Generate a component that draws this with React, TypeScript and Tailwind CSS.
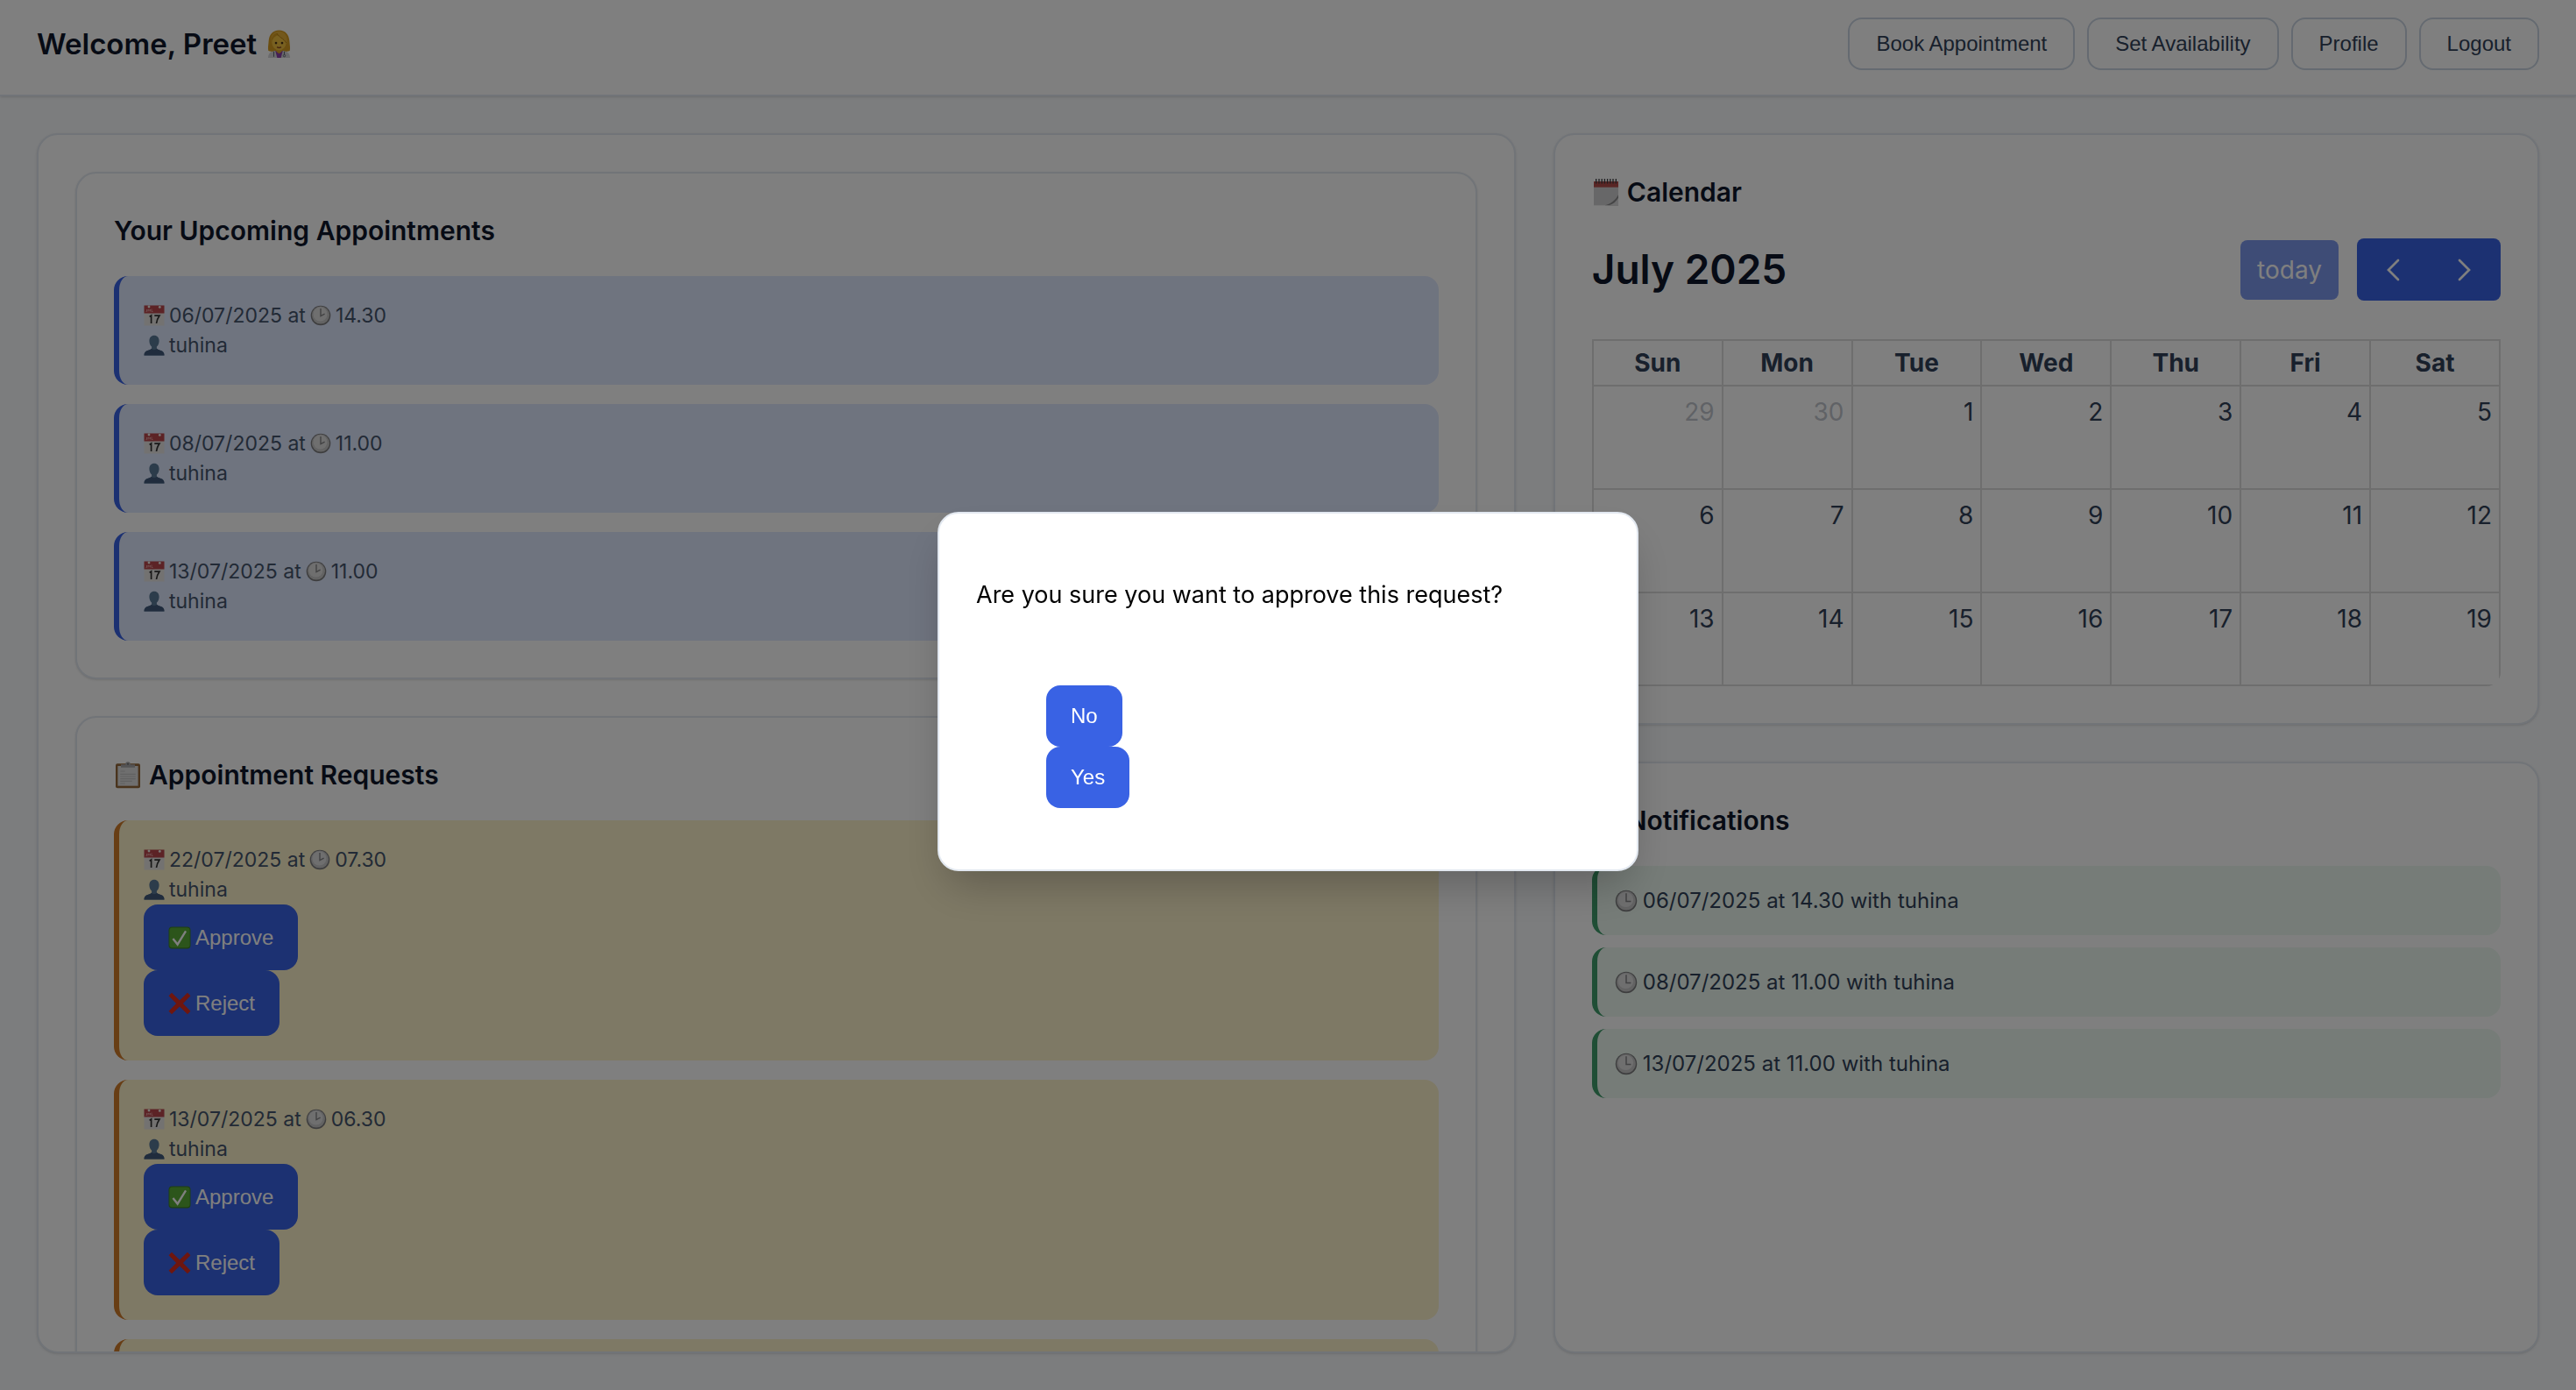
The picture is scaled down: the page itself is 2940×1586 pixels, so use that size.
import type { ReactNode } from 'react';
import clsx from 'clsx';

type Visit = { date: string; time: string; name: string };

const upcoming: Visit[] = [
  { date: '06/07/2025', time: '14.30', name: 'tuhina' },
  { date: '08/07/2025', time: '11.00', name: 'tuhina' },
  { date: '13/07/2025', time: '11.00', name: 'tuhina' },
];

const requests: Visit[] = [
  { date: '22/07/2025', time: '07.30', name: 'tuhina' },
  { date: '13/07/2025', time: '06.30', name: 'tuhina' },
];

const weekdays = ['Sun', 'Mon', 'Tue', 'Wed', 'Thu', 'Fri', 'Sat'];
const weeks = [
  [29, 30, 1, 2, 3, 4, 5],
  [6, 7, 8, 9, 10, 11, 12],
  [13, 14, 15, 16, 17, 18, 19],
];

function Emoji({
  className,
  viewBox = '0 0 24 24',
  children,
}: {
  className: string;
  viewBox?: string;
  children: ReactNode;
}) {
  return (
    <svg viewBox={viewBox} aria-hidden="true" className={clsx('shrink-0', className)}>
      {children}
    </svg>
  );
}

function CalendarEmoji() {
  return (
    <Emoji className="size-6">
      <rect x="0.5" y="1" width="23" height="22.5" fill="#e6e4e2" />
      <rect x="0.5" y="0.5" width="23" height="9" fill="#b8474d" />
      <path d="M2.5 7.5h1V5M5 7.5V5l1.2 1.4L7.4 5v2.5M9 4.5v3h1.5" stroke="#e9a9aa" strokeWidth="0.8" fill="none" />
      <circle cx="6" cy="2" r="1.4" fill="#f2efe9" />
      <circle cx="18.3" cy="2.4" r="1.4" fill="#f2efe9" />
      <path d="M6.6 13.4l2-1.4v9M12.3 12.2h5.6c-1.8 2.6-3 5-3.4 8.8" stroke="#333" strokeWidth="1.7" fill="none" />
    </Emoji>
  );
}

function ClockEmoji({ className = 'size-6', hour = 'two' }: { className?: string; hour?: 'two' | 'three' }) {
  return (
    <Emoji className={className}>
      <circle cx="12" cy="12" r="11.3" fill="#7c7c7e" />
      <circle cx="12" cy="11.6" r="10" fill="#c6c6c7" />
      <circle cx="11.5" cy="10.5" r="8" fill="#dededf" />
      <path
        d={hour === 'two' ? 'M12 4v8.5l4.6-2.4' : 'M12 4v8.5h5'}
        stroke="#858587"
        strokeWidth="1.4"
        fill="none"
      />
    </Emoji>
  );
}

function PersonEmoji() {
  return (
    <Emoji className="size-6">
      <path
        d="M12 .8c3.400 0 5.600 2.500 5.600 6.200 0 3-1.300 5.300-2.700 6.500v1.900c.5 1.200 2.300 1.800 4.700 2.700 2.600.9 3.900 2.600 3.900 5.400H.5c0-2.800 1.300-4.500 3.900-5.400 2.400-.9 4.200-1.500 4.700-2.700v-1.900C7.700 12.300 6.400 10 6.400 7c0-3.700 2.200-6.200 5.600-6.200z"
        fill="#587896"
      />
      <path
        d="M.5 23.500c0-2.800 1.300-4.500 3.900-5.400 2-.7 3.700-1.300 4.400-2.100 1.900 1.500 4.500 1.500 6.400 0 .7.800 2.400 1.400 4.400 2.100 2.600.9 3.900 2.600 3.900 5.400z"
        fill="#40597a"
      />
    </Emoji>
  );
}

function ClipboardEmoji() {
  return (
    <Emoji className="size-8">
      <rect x="1.5" y="2.5" width="21" height="21" rx="1.5" fill="#94693b" />
      <rect x="3.3" y="4.5" width="17.4" height="17" fill="#dedede" />
      <path
        d="M5.500 9h4M5.500 11.500h13M5.500 13.500h13M5.500 15.500h13M5.500 17.500h10M5.500 19.500h4"
        stroke="#c2c2c2"
        strokeWidth="0.9"
      />
      <path d="M6 3.200h3.800a2.200 2.200 0 0 1 4.400 0H18v2.600H6z" fill="#a6a6a8" />
      <circle cx="12" cy="2.8" r="0.8" fill="#6d6d6f" />
    </Emoji>
  );
}

function SpiralCalendarEmoji() {
  return (
    <Emoji className="size-8">
      <rect x="1.5" y="5" width="21" height="18.5" fill="#cfcfd0" />
      <path d="M22.500 14.500v9H11c5.500-1.500 9-4.500 11.500-9z" fill="#8b8b8d" />
      <path d="M22.500 17v6.500h-8c3.500-1.200 6-3.200 8-6.500z" fill="#d9d9da" />
      <rect x="1.5" y="3" width="21" height="5" fill="#b24c4a" />
      <path
        d="M3.500 .8v4M6 .8v4M8.400 .8v4M10.800 .8v4M13.200 .8v4M15.600 .8v4M18 .8v4M20.500 .8v4"
        stroke="#3f3f42"
        strokeWidth="1"
      />
    </Emoji>
  );
}

function BellEmoji() {
  return (
    <Emoji className="size-8">
      <path d="M12 2c4.500 0 6.500 3.500 6.500 8 0 4 1.500 6 3 8h-19c1.500-2 3-4 3-8 0-4.500 2-8 6.500-8z" fill="#f2b632" />
      <circle cx="12" cy="20" r="2.5" fill="#c98a1c" />
    </Emoji>
  );
}

function DoctorEmoji() {
  return (
    <Emoji className="h-8 w-[27px]" viewBox="0 0 20 24">
      <path d="M10 .3C4.500 .3 1.500 4 1.100 9.500c-.2 3.500-.8 5.500-.3 8.300 3 1.700 15.400 1.700 18.400 0 .5-2.800-.1-4.800-.3-8.300C18.500 4 15.500.3 10 .3z" fill="#d79c20" />
      <path d="M.6 24c.2-3.500 1.700-5.300 5.600-6h7.600c3.900.7 5.400 2.500 5.600 6z" fill="#d4d5d8" />
      <path d="M6.800 18h6.400L11.600 24H8.400z" fill="#8b3fa8" />
      <path d="M7.600 15.500h4.800v3L10 20.500l-2.400-2z" fill="#dba52b" />
      <ellipse cx="10" cy="11" rx="6.1" ry="6.4" fill="#f0c040" />
      <path d="M3.200 12.500C2.800 6 5.500 3.300 8.300 2.800c1.200 3.200 5.500 4 8.500 9.200C17.800 5.500 15 1.300 10 1.300S2 5.500 3.200 12.500z" fill="#e6b138" />
      <path d="M8.300 3.300c1.400 3 5.400 3.800 8 8" stroke="#b27c14" strokeWidth="0.7" fill="none" />
      <circle cx="7.400" cy="11.300" r="1" fill="#4a3216" />
      <circle cx="12.600" cy="11.300" r="1" fill="#4a3216" />
      <path d="M8.200 14.700c1.200.9 2.400.9 3.600 0" stroke="#8c4a22" strokeWidth="1" fill="none" />
      <path d="M5.500 18.500v4.500M14.500 18.500v2.800" stroke="#5f6672" strokeWidth="0.8" />
      <circle cx="14.500" cy="22.200" r="0.9" fill="none" stroke="#5f6672" strokeWidth="0.7" />
    </Emoji>
  );
}

function CheckEmoji() {
  return (
    <Emoji className="size-[26px]">
      <rect x="0.5" y="0.5" width="23" height="23" rx="3.5" fill="#3c7f22" />
      <rect x="1.3" y="1.3" width="21.4" height="21" rx="3" fill="#58ab36" />
      <path d="M5 13l4.800 6L18.500 5" stroke="#fff" strokeWidth="2.2" fill="none" />
    </Emoji>
  );
}

function CrossEmoji() {
  return (
    <Emoji className="size-[26px]">
      <path
        d="M3.700 .8L12 8.800l8.300-8L23.500 4 15.600 12l7.900 8-3.200 3.200-8.300-8-8.300 8L.5 20l7.900-8L.5 4z"
        fill="#dc2c1e"
      />
    </Emoji>
  );
}

function Chevron({ direction }: { direction: 'left' | 'right' }) {
  return (
    <svg viewBox="0 0 16 26" aria-hidden="true" className="h-[26px] w-4">
      <path
        d={direction === 'left' ? 'M14 2L3 13l11 11' : 'M2 2l11 11L2 24'}
        stroke="currentColor"
        strokeWidth="2.7"
        strokeLinecap="round"
        fill="none"
      />
    </svg>
  );
}

function HeaderButton({ children }: { children: ReactNode }) {
  return (
    <button
      type="button"
      className="h-[60px] rounded-2xl border-2 border-slate-300 px-[30px] font-['Liberation_Sans',sans-serif] text-2xl text-slate-700"
    >
      {children}
    </button>
  );
}

function PrimaryButton({ className, children }: { className: string; children: ReactNode }) {
  return (
    <button
      type="button"
      className={clsx(
        "flex items-center gap-[5px] rounded-2xl bg-[#3962e4] px-7 font-['Liberation_Sans',sans-serif] text-2xl text-white",
        className,
      )}
    >
      {children}
    </button>
  );
}

function Card({ className, children }: { className?: string; children: ReactNode }) {
  return (
    <section className={clsx('rounded-3xl border-2 border-slate-200 bg-white p-[42px] shadow-sm', className)}>
      {children}
    </section>
  );
}

function CardTitle({ children }: { children: ReactNode }) {
  return (
    <h2 className="mb-[29px] flex items-center gap-2 text-[30px] leading-[46px] font-semibold text-slate-900">
      {children}
    </h2>
  );
}

function VisitLines({ visit }: { visit: Visit }) {
  return (
    <>
      <p className="flex items-center gap-[5px]">
        <CalendarEmoji />
        <span>{visit.date} at</span>
        <ClockEmoji />
        <span>{visit.time}</span>
      </p>
      <p className="flex items-center gap-[5px]">
        <PersonEmoji />
        <span>{visit.name}</span>
      </p>
    </>
  );
}

export default function App() {
  return (
    <div className="flex h-screen flex-col bg-slate-50 font-['Inter',sans-serif] text-slate-900">
      <header className="flex items-center justify-between border-b-2 border-slate-200 bg-white px-[42px] pt-5 pb-7 shadow-sm">
        <h1 className="flex items-center gap-3 text-[33px] leading-[60px] font-semibold">
          Welcome, Preet
          <DoctorEmoji />
        </h1>
        <nav className="flex gap-3.5">
          <HeaderButton>Book Appointment</HeaderButton>
          <HeaderButton>Set Availability</HeaderButton>
          <HeaderButton>Profile</HeaderButton>
          <HeaderButton>Logout</HeaderButton>
        </nav>
      </header>

      <main className="grid min-h-0 flex-1 grid-cols-[3fr_2fr] gap-[43px] p-[42px]">
        <Card className="flex min-h-0 min-w-0 flex-col gap-[42px] overflow-hidden pb-0">
          <Card className="shrink-0">
            <CardTitle>Your Upcoming Appointments</CardTitle>
            <ul className="flex flex-col gap-[22px] text-[23px] leading-[34px] text-slate-600">
              {upcoming.map((visit) => (
                <li key={visit.date} className="rounded-2xl border-l-6 border-[#3962e4] bg-[#dfe8fe] p-7">
                  <VisitLines visit={visit} />
                </li>
              ))}
            </ul>
          </Card>

          <Card className="shrink-0">
            <CardTitle>
              <ClipboardEmoji />
              Appointment Requests
            </CardTitle>
            <ul className="flex flex-col gap-[22px] text-[23px] leading-[34px] text-slate-600">
              {requests.map((visit) => (
                <li key={visit.date} className="rounded-2xl border-l-6 border-[#d07c2b] bg-[#fdf2cb] p-7">
                  <VisitLines visit={visit} />
                  <PrimaryButton className="h-[75px]">
                    <CheckEmoji />
                    Approve
                  </PrimaryButton>
                  <PrimaryButton className="h-[75px]">
                    <CrossEmoji />
                    Reject
                  </PrimaryButton>
                </li>
              ))}
              <li aria-hidden="true" className="h-20 rounded-2xl border-l-6 border-[#d07c2b] bg-[#fdf2cb]" />
            </ul>
          </Card>
        </Card>

        <div className="flex min-h-0 min-w-0 flex-col gap-[42px]">
          <Card>
            <CardTitle>
              <SpiralCalendarEmoji />
              Calendar
            </CardTitle>
            <div className="mb-[43px] flex h-[73px] items-center justify-between">
              <h3 className="text-[46px] font-semibold">July 2025</h3>
              <div className="flex items-center gap-[21px] text-white">
                <button
                  type="button"
                  disabled
                  className="h-[68px] rounded-lg bg-[#3962e4] px-[19px] text-[28px] opacity-65"
                >
                  today
                </button>
                <div className="flex h-[71px] overflow-hidden rounded-lg bg-[#3962e4]">
                  <button type="button" aria-label="Previous month" className="flex w-[82px] items-center justify-center">
                    <Chevron direction="left" />
                  </button>
                  <button type="button" aria-label="Next month" className="flex w-[82px] items-center justify-center">
                    <Chevron direction="right" />
                  </button>
                </div>
              </div>
            </div>
            <div className="overflow-hidden rounded-b-2xl">
              <table className="w-full table-fixed border-collapse text-[28px] text-slate-700">
                <thead>
                  <tr>
                    {weekdays.map((day) => (
                      <th key={day} scope="col" className="h-[52px] border-2 border-[#ddd] p-0 leading-10 font-bold">
                        {day}
                      </th>
                    ))}
                  </tr>
                </thead>
                <tbody>
                  {weeks.map((week, row) => (
                    <tr key={week[0]}>
                      {week.map((day) => (
                        <td
                          key={day}
                          className={clsx(
                            'border-2 border-[#ddd] px-2 pt-2 text-right align-top leading-[42px]',
                            row === 2 ? 'h-[106px]' : 'h-[118px]',
                          )}
                        >
                          <span className={clsx(day > 19 && 'opacity-30')}>{day}</span>
                        </td>
                      ))}
                    </tr>
                  ))}
                </tbody>
              </table>
            </div>
          </Card>

          <Card className="flex-1">
            <CardTitle>
              <BellEmoji />
              Notifications
            </CardTitle>
            <ul className="flex flex-col gap-3.5 text-2xl leading-[39px] text-slate-700">
              {upcoming.map((visit) => (
                <li
                  key={visit.date}
                  className="flex items-center gap-1.5 rounded-2xl border-l-6 border-[#3f9c6b] bg-[#ecf9f0] p-5"
                >
                  <ClockEmoji className="size-[26px]" hour="three" />
                  {visit.date} at {visit.time} with {visit.name}
                </li>
              ))}
            </ul>
          </Card>
        </div>
      </main>

      <div className="fixed inset-0 flex items-center justify-center bg-black/50 pb-2">
        <div
          role="dialog"
          aria-modal="true"
          aria-labelledby="confirm-message"
          className="w-[800px] rounded-3xl border-2 border-slate-200 bg-white px-[42px] pt-[71px] pb-[70px] shadow-2xl"
        >
          <p id="confirm-message" className="mb-[82px] text-[27px] leading-[43px] text-black">
            Are you sure you want to approve this request?
          </p>
          <div className="px-20">
            <PrimaryButton className="h-[70px]">No</PrimaryButton>
            <PrimaryButton className="h-[70px]">Yes</PrimaryButton>
          </div>
        </div>
      </div>
    </div>
  );
}
